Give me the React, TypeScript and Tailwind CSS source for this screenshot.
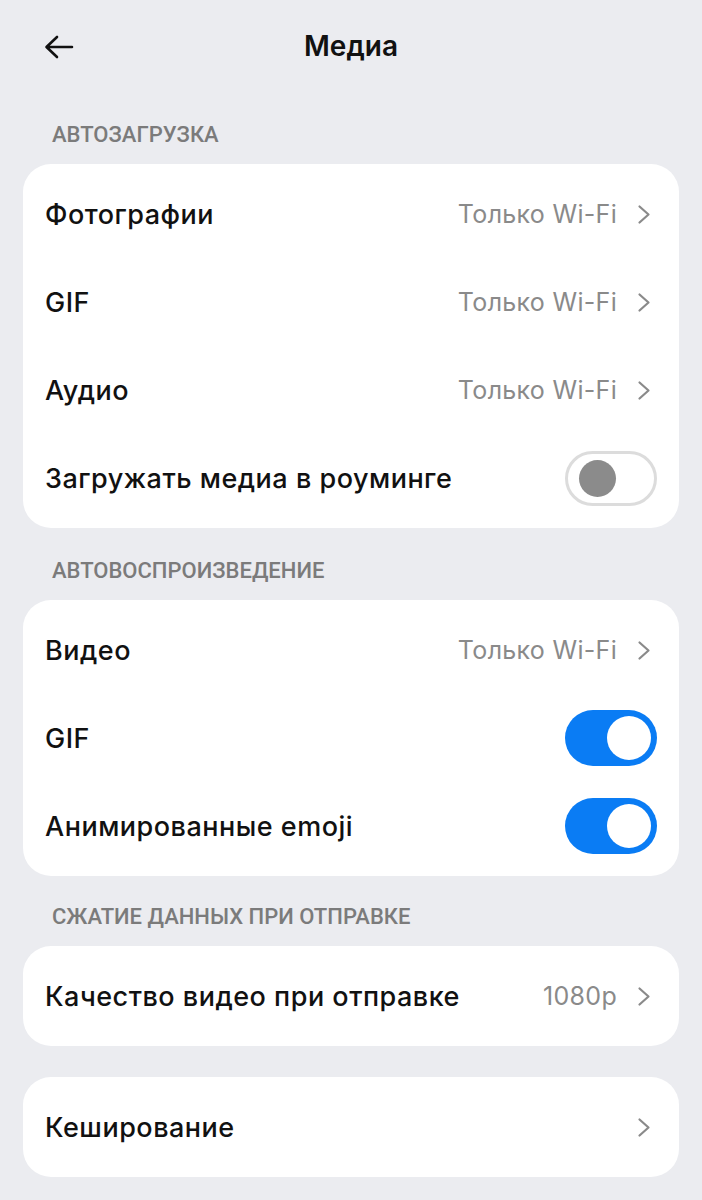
import { ReactNode } from "react";

const ROBOTO = "font-['Roboto','Noto_Sans',sans-serif]";
const INTER = "font-['Inter','Roboto',sans-serif]";

function Chevron() {
  return (
    <svg width="14" height="21" viewBox="0 0 14 21" fill="none" className="shrink-0">
      <path
        d="M2.5 2.5 L11.5 10.5 L2.5 18.5"
        stroke="#8a8a8a"
        strokeWidth="2.2"
        strokeLinecap="round"
        strokeLinejoin="round"
      />
    </svg>
  );
}

function Toggle({ on }: { on: boolean }) {
  if (on) {
    return (
      <div className="flex h-[56px] w-[92px] items-center justify-end rounded-full bg-[#0a7cf4] pr-[6px]">
        <div className="h-[44px] w-[44px] rounded-full bg-white" />
      </div>
    );
  }
  return (
    <div className="flex h-[55px] w-[92px] items-center rounded-full border-[3px] border-[#dcdcdc] bg-white pl-[11px]">
      <div className="h-[37px] w-[37px] rounded-full bg-[#8b8b8b]" />
    </div>
  );
}

function Row({ title, value, right }: { title: string; value?: string; right?: ReactNode }) {
  return (
    <div className="flex h-[88px] items-center justify-between pl-[22px] pr-[22px]">
      <span className={`${INTER} text-[27px] font-medium leading-none tracking-[0.5px] text-[#111111]`}>
        {title}
      </span>
      {right ?? (
        <div className="flex items-center gap-[20px] pr-[6px]">
          {value && (
            <span className={`${INTER} text-[25px] leading-none tracking-[0.3px] text-[#8a8a8a]`}>
              {value}
            </span>
          )}
          <Chevron />
        </div>
      )}
    </div>
  );
}

function Card({ children }: { children: ReactNode }) {
  return <div className="mx-[23px] rounded-[28px] bg-white py-[6px]">{children}</div>;
}

function Label({ children, short = false }: { children: ReactNode; short?: boolean }) {
  return (
    <div
      className={`${ROBOTO} ${short ? "h-[70px] pt-[29px]" : "h-[72px] pt-[31px]"} pl-[52px] text-[22px] leading-[24px] font-medium uppercase text-[#7b7b7b]`}
    >
      {children}
    </div>
  );
}

export default function App() {
  return (
    <div className={`${INTER} min-h-[1200px] w-full bg-[#ebecf0]`}>
      <header className="relative flex h-[92px] items-center justify-center">
        <svg
          width="32"
          height="26"
          viewBox="0 0 32 26"
          fill="none"
          className="absolute left-[43px] top-[34px]"
        >
          <path
            d="M29 13 H4 M14 3 L3.5 13 L14 23"
            stroke="#111111"
            strokeWidth="2.6"
            strokeLinecap="round"
            strokeLinejoin="round"
          />
        </svg>
        <h1 className="text-[28px] font-semibold leading-none text-[#111111]">Медиа</h1>
      </header>

      <Label>Автозагрузка</Label>
      <Card>
        <Row title="Фотографии" value="Только Wi-Fi" />
        <Row title="GIF" value="Только Wi-Fi" />
        <Row title="Аудио" value="Только Wi-Fi" />
        <Row title="Загружать медиа в роуминге" right={<Toggle on={false} />} />
      </Card>

      <Label>Автовоспроизведение</Label>
      <Card>
        <Row title="Видео" value="Только Wi-Fi" />
        <Row title="GIF" right={<Toggle on />} />
        <Row title="Анимированные emoji" right={<Toggle on />} />
      </Card>

      <Label short>Сжатие данных при отправке</Label>
      <Card>
        <Row title="Качество видео при отправке" value="1080p" />
      </Card>

      <div className="h-[31px]" />
      <Card>
        <Row title="Кеширование" />
      </Card>
    </div>
  );
}
